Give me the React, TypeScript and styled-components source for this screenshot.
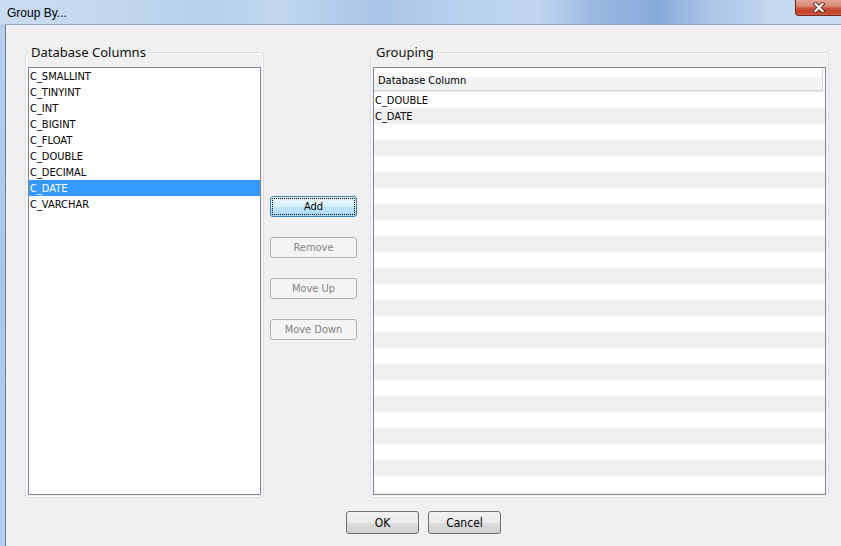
import styled, { createGlobalStyle } from 'styled-components';

const GlobalStyle = createGlobalStyle`
    html, body {
        margin: 0;
        padding: 0;
        overflow: hidden;
        background: #f0f0f0;
    }
`;

const uiFont = `"DejaVu Sans Condensed", "Liberation Sans", sans-serif`;

const sourceColumns = [
	'C_SMALLINT',
	'C_TINYINT',
	'C_INT',
	'C_BIGINT',
	'C_FLOAT',
	'C_DOUBLE',
	'C_DECIMAL',
	'C_DATE',
	'C_VARCHAR',
];

const grouped = ['C_DOUBLE', 'C_DATE'];
const tableRows = Array.from({ length: 26 }, (_, i) => grouped[i] ?? '');

function CloseGlyph() {
	return (
		<svg width="14" height="11" viewBox="0 0 14 11">
			<path d="M3.5 2 L10.5 9 M10.5 2 L3.5 9" stroke="#5a2a22" strokeWidth="4" strokeLinecap="square" fill="none" />
			<path d="M3.5 2 L10.5 9 M10.5 2 L3.5 9" stroke="#ffffff" strokeWidth="2.2" strokeLinecap="square" fill="none" />
		</svg>
	);
}

function App() {
	return (
		<Window>
			<GlobalStyle />
			<TitleBar>
				<Title>Group By...</Title>
				<CloseButton>
					<CloseGlyph />
				</CloseButton>
			</TitleBar>
			<Body>
				<GroupsRow>
					<Group width={239}>
						<Legend>Database Columns</Legend>
						<ListBox>
							{sourceColumns.map(name => (
								<ListItem key={name} selected={name === 'C_DATE'}>{name}</ListItem>
							))}
						</ListBox>
					</Group>
					<ActionColumn>
						<ActionButton isDefault>Add</ActionButton>
						<ActionButton disabled>Remove</ActionButton>
						<ActionButton disabled>Move Up</ActionButton>
						<ActionButton disabled>Move Down</ActionButton>
					</ActionColumn>
					<Group width={459}>
						<Legend>Grouping</Legend>
						<Table>
							<HeaderRow>
								<HeaderCell>Database Column</HeaderCell>
							</HeaderRow>
							<Rows>
								{tableRows.map((name, i) => (
									<TableRow key={i} striped={i % 2 === 1}>{name}</TableRow>
								))}
							</Rows>
						</Table>
					</Group>
				</GroupsRow>
				<Footer>
					<DialogButton>OK</DialogButton>
					<DialogButton>Cancel</DialogButton>
				</Footer>
			</Body>
		</Window>
	);
}

export default App;

const Window = styled.div`
    display: flex;
    flex-direction: column;
    width: 841px;
    height: 546px;
    overflow: hidden;
    background: linear-gradient(180deg, #b7d1ee 0%, #a9c8ea 50%, #b4d0ee 100%);
`

const TitleBar = styled.div`
    display: flex;
    justify-content: space-between;
    align-items: flex-start;
    height: 24px;
    flex-shrink: 0;
    background: linear-gradient(90deg,
        #c9dcf1 0%, #c3d8ef 12%, #b6cfeb 25%, #c1d7ef 33%,
        #a8c4e6 45%, #b9d1ed 55%, #c0d6ef 64%, #9dbbe2 70%,
        #86aadb 78%, #a8c3e6 84%, #c4d9f0 92%, #c8dcf1 100%);
`

const Title = styled.div`
    font-family: "Liberation Sans", sans-serif;
    font-size: 12px;
    color: #000;
    margin: 6px 0 0 7px;
`

const CloseButton = styled.div`
    display: flex;
    align-items: center;
    justify-content: center;
    width: 46px;
    height: 16px;
    box-sizing: border-box;
    border: 1px solid #6e2a20;
    border-top: none;
    border-right: none;
    border-radius: 0 0 0 4px;
    background: linear-gradient(180deg, #e6a396 0%, #d98a78 40%, #c8513a 55%, #c0412a 80%, #d0604a 100%);
`

const Body = styled.div`
    display: flex;
    flex-direction: column;
    flex: 1;
    margin-left: 5px;
    padding-top: 27px;
    background: #f0f0f0;
    border-left: 1px solid #6d7e92;
    border-top: 1px solid #97a5b4;
`

const GroupsRow = styled.div`
    display: flex;
    padding: 0 0 0 19px;
`

const Group = styled.div<{ width: number }>`
    position: relative;
    display: flex;
    flex-direction: column;
    box-sizing: border-box;
    width: ${props => props.width}px;
    height: 446px;
    padding: 14px 2px 2px 2px;
    border: 1px solid #d5dfe5;
    border-radius: 3px;
    box-shadow: inset 0 0 0 1px #ffffff;
`

const Legend = styled.div`
    position: absolute;
    top: -10px;
    left: 3px;
    padding: 0 2px 0 2px;
    background: #f0f0f0;
    font-family: "Noto Sans", "Liberation Sans", sans-serif;
    font-size: 13px;
    line-height: 18px;
    color: #111;
`

const ListBox = styled.div`
    flex: 1;
    background: #fff;
    border: 1px solid #828790;
`

const ListItem = styled.div<{ selected?: boolean }>`
    height: 16px;
    line-height: 18px;
    padding-left: 1px;
    overflow: hidden;
    font-family: ${uiFont};
    font-size: 11px;
    background: ${props => props.selected ? '#3399ff' : 'transparent'};
    color: ${props => props.selected ? '#fff' : '#000'};
`

const ActionColumn = styled.div`
    display: flex;
    flex-direction: column;
    gap: 20px;
    width: 106px;
    box-sizing: border-box;
    padding: 144px 0 0 6px;
`

const ActionButton = styled.button<{ isDefault?: boolean }>`
    position: relative;
    width: 87px;
    height: 21px;
    padding: 0;
    border-radius: 3px;
    font-family: ${uiFont};
    font-size: 11px;
    border: 1px solid ${props => props.isDefault ? '#3c7fb1' : '#adb2b5'};
    background: ${props => props.isDefault
		? 'linear-gradient(180deg, #eaf6fd 0%, #d9f0fc 50%, #bee6fd 51%, #a7d9f5 100%)'
		: '#f4f4f4'};
    color: ${props => props.isDefault ? '#000' : '#838383'};
    outline: ${props => props.isDefault ? '1px dotted #000' : 'none'};
    outline-offset: -3px;
`

const Table = styled.div`
    display: flex;
    flex-direction: column;
    flex: 1;
    overflow: hidden;
    background: #fff;
    border: 1px solid #828790;
`

const HeaderRow = styled.div`
    display: flex;
    padding-right: 2px;
    border-bottom: 1px solid #e5e5e5;
`

const HeaderCell = styled.div`
    flex: 1;
    height: 22px;
    line-height: 26px;
    padding-left: 4px;
    font-family: ${uiFont};
    font-size: 11px;
    color: #000;
    background: linear-gradient(180deg, #ffffff 0%, #ffffff 40%, #f3f4f6 41%, #f1f2f4 100%);
    border-right: 1px solid #d5d5d5;
    border-bottom: 1px solid #d5d5d5;
`

const Rows = styled.div`
    display: flex;
    flex-direction: column;
`

const TableRow = styled.div<{ striped: boolean }>`
    height: 16px;
    line-height: 18px;
    padding-left: 1px;
    overflow: hidden;
    font-family: ${uiFont};
    font-size: 11px;
    color: #000;
    background: ${props => props.striped ? '#efefef' : '#fff'};
`

const Footer = styled.div`
    display: flex;
    justify-content: center;
    gap: 9px;
    margin-top: 13px;
`

const DialogButton = styled.button`
    width: 73px;
    height: 23px;
    padding: 0;
    border: 1px solid #707070;
    border-radius: 3px;
    font-family: ${uiFont};
    font-size: 12px;
    color: #000;
    background: linear-gradient(180deg, #f2f2f2 0%, #ebebeb 50%, #dddddd 51%, #cfcfcf 100%);
`
